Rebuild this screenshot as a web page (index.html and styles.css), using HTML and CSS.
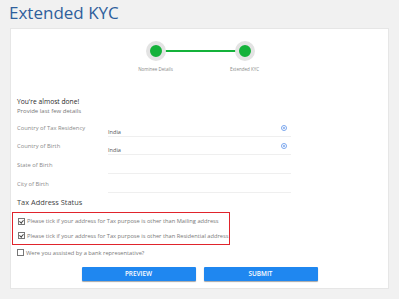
FILE: index.html
```html
<!DOCTYPE html>
<html>
<head>
<meta charset="utf-8">
<link rel="stylesheet" href="styles.css">
</head>
<body>
<h1 class="title">Extended KYC</h1>
<div class="card">
  <div class="steps">
    <div class="step">
      <div class="dot"></div>
      <div class="step-label">Nominee Details</div>
    </div>
    <div class="step">
      <div class="dot"></div>
      <div class="step-label">Extended KYC</div>
    </div>
    <div class="track"></div>
  </div>
  <div class="intro">
    <div class="done">You're almost done!</div>
    <div class="sub">Provide last few details</div>
  </div>
  <div class="rows">
    <div class="row"><span class="lbl">Country of Tax Residency</span><span class="field">India<span class="clear"></span></span></div>
    <div class="row"><span class="lbl">Country of Birth</span><span class="field">India<span class="clear"></span></span></div>
    <div class="row"><span class="lbl">State of Birth</span><span class="field"></span></div>
    <div class="row"><span class="lbl">City of Birth</span><span class="field"></span></div>
  </div>
  <div class="section">Tax Address Status</div>
  <div class="redbox">
    <label class="chk"><span class="box checked"></span>Please tick if your address for Tax purpose is other than Mailing address</label>
    <label class="chk"><span class="box checked"></span>Please tick if your address for Tax purpose is other than Residential address</label>
  </div>
  <label class="chk alone"><span class="box"></span>Were you assisted by a bank representative?</label>
  <div class="buttons">
    <button class="btn">PREVIEW</button>
    <button class="btn">SUBMIT</button>
  </div>
</div>
</body>
</html>
```
FILE: styles.css
```css
html, body { margin: 0; padding: 0; }
body {
  background: #f1f1f1;
  font-family: "Open Sans", "Noto Sans", sans-serif;
  width: 399px;
  height: 299px;
  overflow: hidden;
}
.title {
  margin: 0;
  padding: 1px 0 0 9px;
  font-size: 17px;
  font-weight: 400;
  color: #2f5f9c;
  line-height: 24px;
  height: 27px;
}
.card {
  margin-left: 10px;
  width: 379px;
  height: 261px;
  background: #fff;
  border: 1px solid #e6e6e6;
  box-sizing: border-box;
}
.steps {
  position: relative;
  display: flex;
  justify-content: center;
  gap: 49px;
  padding-top: 12px;
  height: 56px;
  box-sizing: border-box;
  margin-left: 1px;
}
.step {
  display: flex;
  flex-direction: column;
  align-items: center;
  width: 40px;
  position: relative;
  z-index: 1;
}
.dot {
  width: 12px;
  height: 12px;
  border-radius: 50%;
  background: #14b23a;
  border: 4px solid #e3e3e3;
}
.step-label {
  font-size: 4.5px;
  color: #8a8a8a;
  margin-top: 5px;
  white-space: nowrap;
}
.track {
  position: absolute;
  left: 144px;
  width: 89px;
  top: 21px;
  height: 2px;
  background: #14b23a;
}
.intro {
  padding-left: 6px;
  margin-top: 12px;
}
.done {
  font-size: 6.7px;
  color: #2a2a2a;
  line-height: 10px;
}
.sub {
  font-size: 6px;
  color: #777;
  line-height: 9px;
}
.rows {
  padding-left: 6px;
  margin-top: 2px;
}
.row {
  display: flex;
  align-items: flex-end;
  height: 18.7px;
}
.lbl {
  width: 91px;
  font-size: 5.8px;
  color: #8a8a8a;
  padding-bottom: 5px;
}
.field {
  position: relative;
  width: 183px;
  height: 12px;
  border-bottom: 1px solid #efefef;
  font-size: 5.6px;
  color: #555;
  line-height: 12px;
  box-sizing: border-box;
  padding-top: 1px;
}
.clear {
  position: absolute;
  right: 4px;
  top: 0px;
  width: 6px;
  height: 6px;
  border-radius: 50%;
  border: 1px solid #7aa6ee;
  box-sizing: border-box;
}
.clear::after {
  content: "";
  position: absolute;
  left: 1px; top: 1px;
  width: 2px; height: 2px;
  border-radius: 50%;
  background: #7aa6ee;
}
.section {
  padding-left: 6px;
  margin-top: 3px;
  font-size: 7.4px;
  color: #444;
  line-height: 12px;
}
.redbox {
  margin: 4px 0 0 1px;
  width: 218px;
  height: 33px;
  border: 1px solid #e0242c;
  box-sizing: border-box;
  display: flex;
  flex-direction: column;
  justify-content: space-around;
  padding: 1px 0 1px 5px;
}
.chk {
  display: flex;
  align-items: center;
  font-size: 5.72px;
  color: #7a7a7a;
  white-space: nowrap;
  line-height: 8px;
}
.box {
  width: 5px;
  height: 5px;
  border: 1px solid #777;
  margin-right: 2px;
  position: relative;
  flex: none;
}
.box.checked::after {
  content: "";
  position: absolute;
  left: 1px; top: 0px;
  width: 1.5px; height: 3px;
  border: solid #444;
  border-width: 0 1px 1px 0;
  transform: rotate(40deg);
}
.alone {
  margin: 4px 0 0 6px;
}
.buttons {
  display: flex;
  gap: 8px;
  justify-content: center;
  margin-top: 10px;
  margin-left: 0px;
}
.btn {
  width: 114px;
  height: 14px;
  background: #1f87f0;
  color: #fff;
  border: none;
  border-radius: 1px;
  box-shadow: 0 1px 1px rgba(0,0,0,0.35);
  font-family: "Open Sans", sans-serif;
  font-size: 6.4px;
  font-weight: 600;
  padding: 0;
}
```
